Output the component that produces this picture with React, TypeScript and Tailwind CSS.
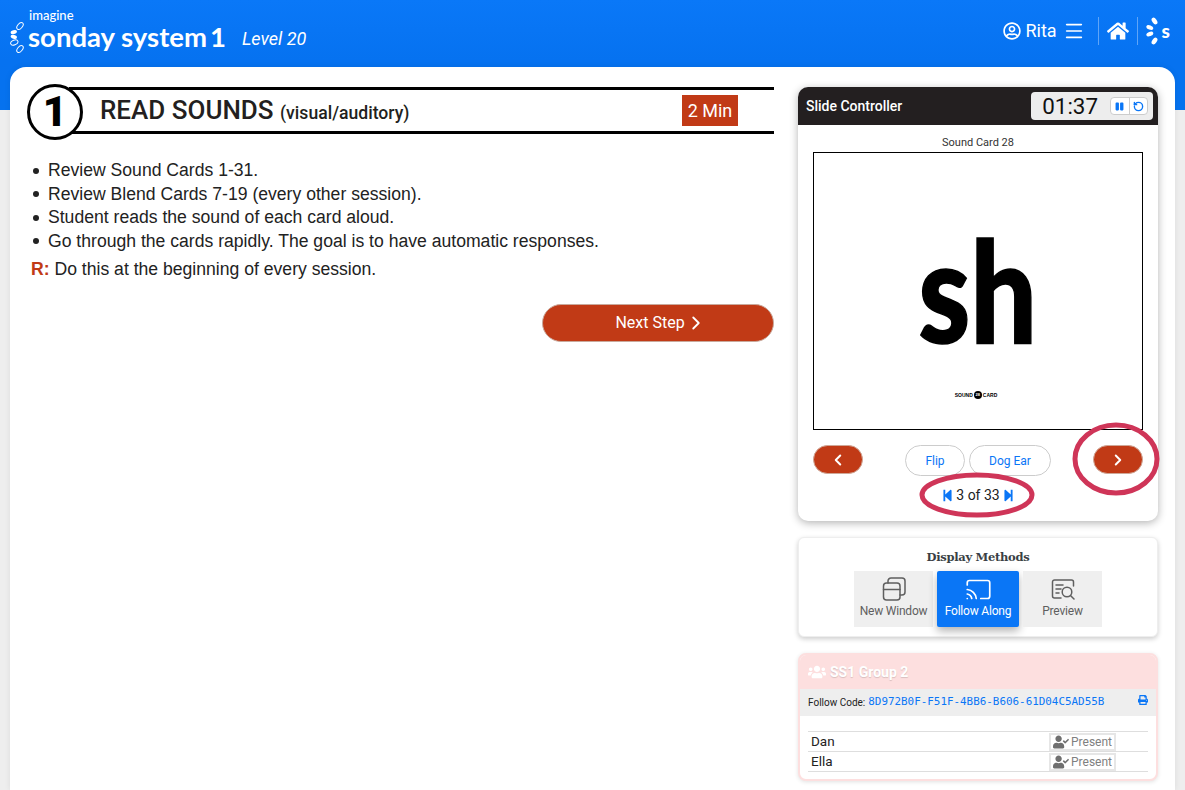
import { ChevronLeft, ChevronRight, Menu, RotateCcw, Cast } from 'lucide-react';
import { FaHome, FaPause, FaPrint, FaRegUserCircle, FaStepBackward, FaStepForward, FaUserCheck, FaUsers } from 'react-icons/fa';

const roboto = "font-['Roboto',sans-serif]";
const arial = "font-['Liberation_Sans',Arial,sans-serif]";

const steps = [
    'Review Sound Cards 1-31.',
    'Review Blend Cards 7-19 (every other session).',
    'Student reads the sound of each card aloud.',
    'Go through the cards rapidly. The goal is to have automatic responses.',
];

function BurstLogo() {
    return (
        <svg width="18" height="34" viewBox="0 0 18 34" className="mt-[12px] shrink-0">
            <ellipse cx="10" cy="5" rx="4" ry="2.4" transform="rotate(-50 10 5)" fill="none" stroke="white" strokeWidth="1" />
            <ellipse cx="3.8" cy="11.2" rx="3.2" ry="1.9" transform="rotate(-15 3.8 11.2)" fill="white" />
            <ellipse cx="3.8" cy="15.8" rx="3.2" ry="1.9" transform="rotate(15 3.8 15.8)" fill="white" />
            <ellipse cx="4.3" cy="21.5" rx="3.8" ry="2.3" transform="rotate(-20 4.3 21.5)" fill="none" stroke="white" strokeWidth="1" />
            <ellipse cx="10" cy="28" rx="4" ry="2.4" transform="rotate(-50 10 28)" fill="none" stroke="white" strokeWidth="1" />
        </svg>
    );
}

function SmallBurst() {
    return (
        <svg width="14" height="28" viewBox="0 0 14 28" className="shrink-0">
            <ellipse cx="8.5" cy="4" rx="3.8" ry="2.3" transform="rotate(55 8.5 4)" fill="white" />
            <ellipse cx="3.8" cy="10.5" rx="3.6" ry="2.1" transform="rotate(20 3.8 10.5)" fill="white" />
            <ellipse cx="3.8" cy="17" rx="3.6" ry="2.1" transform="rotate(-20 3.8 17)" fill="white" />
            <ellipse cx="8.5" cy="24" rx="3.8" ry="2.3" transform="rotate(-55 8.5 24)" fill="white" />
        </svg>
    );
}

function WindowIcon() {
    return (
        <svg width="24" height="24" viewBox="0 0 24 24" fill="none" stroke="#5f5f5f" strokeWidth="1.5" strokeLinecap="round">
            <rect x="1.5" y="6" width="16.5" height="17" rx="3" />
            <path d="M1.5 12.5H18" />
            <path d="M6 6V4a3 3 0 0 1 3-3h11a3 3 0 0 1 3 3v11a3 3 0 0 1-3 3h-2" />
        </svg>
    );
}

function PreviewIcon() {
    return (
        <svg width="24" height="24" viewBox="0 0 24 24" fill="none" stroke="#5f5f5f" strokeWidth="1.5" strokeLinecap="round">
            <path d="M10 21H3.5a2 2 0 0 1-2-2V5a2 2 0 0 1 2-2h17a2 2 0 0 1 2 2v4" />
            <path d="M5 8h7M5 12h5M5 16h3" />
            <circle cx="16" cy="15" r="4.8" />
            <path d="M19.5 18.5l3.5 3.5" />
        </svg>
    );
}

function Attendance({ name }: { name: string }) {
    return (
        <div className="flex h-5 items-center border-b border-[#dedede]">
            <span className={`w-[241px] pl-[3px] text-[13.5px] text-[#222] ${roboto}`}>{name}</span>
            <span className={`flex h-[18px] w-[67px] items-center justify-center gap-[2px] border-2 border-[#e6e6e6] text-[12px] text-[#808080] ${roboto}`}>
                <FaUserCheck size={16} color="#6f6f6f" />
                Present
            </span>
        </div>
    );
}

function PillArrow({ children }: { children: React.ReactNode }) {
    return (
        <button className="flex h-[29px] w-[50px] items-center justify-center rounded-full border border-[#cfa898] bg-[#c13a16] text-white">
            {children}
        </button>
    );
}

export default function App() {
    return (
        <div className="relative flex h-[790px] w-[1185px] flex-col overflow-hidden bg-[linear-gradient(#0a78f8_0px,#0672f0_60px,#0672ee_110px,#eeeeee_110px)]">
            <header className="flex h-[67px] shrink-0 items-start justify-between text-white">
                <div className="flex pl-[10px] pt-[9px]">
                    <BurstLogo />
                    <div className="ml-[1px] flex flex-col">
                        <span className="font-['Lato',sans-serif] text-[13px] leading-[13px] font-medium">imagine</span>
                        <span className="mt-[2px] ml-[-1px] font-['Lato',sans-serif] text-[27.5px] leading-[26px] font-bold whitespace-nowrap">
                            sonday system<span className="ml-[3px]">1</span>
                        </span>
                    </div>
                    <span className={`ml-[16px] mt-[18px] text-[18px] italic leading-[24px] ${roboto}`}>Level 20</span>
                </div>
                <div className="flex items-center pr-[15px] pt-[17px]">
                    <FaRegUserCircle size={18} />
                    <span className={`ml-[4px] text-[18px] leading-[28px] ${roboto}`}>Rita</span>
                    <Menu size={22} strokeWidth={1.8} className="ml-[6px]" />
                    <div className="ml-[13px] h-[28px] border-l border-[#5fa5f8]" />
                    <FaHome size={22} className="ml-[8px]" />
                    <div className="ml-[8px] h-[28px] border-l border-[#5fa5f8]" />
                    <div className="ml-[8px] flex items-center">
                        <SmallBurst />
                        <span className="ml-[2px] font-['Lato',sans-serif] text-[19px] leading-[20px] font-black">s</span>
                    </div>
                </div>
            </header>

            <main className="mx-[10px] flex min-h-0 flex-1 gap-[24px] rounded-t-[16px] bg-white pl-[17px] shadow-[0_0_6px_rgba(0,0,0,0.08)]">
                <section className="w-[747px] shrink-0 pt-[17px]">
                    <div className="flex items-start">
                        <div className={`z-10 flex h-[56px] w-[56px] shrink-0 items-center justify-center rounded-full border-[3px] border-black bg-white text-[42px] font-black leading-none text-black ${roboto}`}>
                            1
                        </div>
                        <div className="ml-[-14px] mt-[3px] flex h-[47px] flex-1 items-center border-y-[3px] border-black pl-[31px]">
                            <h1 className={`mt-[2px] text-[26px] font-medium leading-[30px] text-[#231f20] ${roboto}`}>
                                READ SOUNDS <span className="text-[17.6px]">(visual/auditory)</span>
                            </h1>
                            <span className={`ml-auto mr-[36px] flex h-[31px] w-[56px] items-center justify-center bg-[#c13a16] text-[18px] text-white ${roboto}`}>2 Min</span>
                        </div>
                    </div>
                    <ul className={`mt-[19px] text-[17.6px] leading-[23.5px] text-[#222] ${arial}`}>
                        {steps.map((step) => (
                            <li key={step} className="flex items-center">
                                <span className="ml-[6px] mr-[9px] h-[6px] w-[6px] shrink-0 rounded-full bg-[#222]" />
                                {step}
                            </li>
                        ))}
                    </ul>
                    <p className={`mt-[5px] ml-[4px] text-[17.6px] leading-[23.5px] text-[#222] ${arial}`}>
                        <b className="text-[#c13a16]">R:</b> Do this at the beginning of every session.
                    </p>
                    <div className="mt-[22px] flex justify-end">
                        <button className={`flex h-[38px] w-[232px] items-center justify-center rounded-full border border-[#c9a99c] bg-[#c13a16] text-[16px] text-white ${roboto}`}>
                            Next Step <ChevronRight size={22} strokeWidth={2} className="mr-[-6px]" />
                        </button>
                    </div>
                </section>

                <aside className="flex w-[360px] shrink-0 flex-col gap-[16px] pt-[20px]">
                    <div className="h-[434px] overflow-hidden rounded-[10px] bg-white shadow-[0_2px_8px_rgba(0,0,0,0.3)]">
                        <div className="flex h-[38px] items-center justify-between bg-[#231f20] pl-[8px] pr-[5px]">
                            <span className={`text-[14px] font-medium text-white ${roboto}`}>Slide Controller</span>
                            <div className="flex h-[28px] w-[122px] items-center justify-end rounded-[4px] bg-[#ededed] pr-[5px]">
                                <span className={`mr-[12px] text-[22.4px] leading-none text-[#111] ${roboto}`}>01:37</span>
                                <div className="flex h-[18px] w-[38px] overflow-hidden rounded-[4px] border border-[#ccc] bg-white text-[#0a76f6]">
                                    <span className="flex flex-1 items-center justify-center border-r border-[#ccc]"><FaPause size={9} /></span>
                                    <span className="flex flex-1 items-center justify-center"><RotateCcw size={11} strokeWidth={3} /></span>
                                </div>
                            </div>
                        </div>
                        <p className={`mt-[11px] text-center text-[11px] leading-[14px] text-[#333] ${roboto}`}>Sound Card 28</p>
                        <div className="mx-[15px] mt-[2px] flex h-[278px] flex-col items-center border border-black">
                            <span className="mt-[50px] inline-block origin-center scale-x-[0.83] font-['Lato',sans-serif] text-[142px] leading-[170px] font-black text-black [-webkit-text-stroke:1.5px_black]">sh</span>
                            <span className="mr-[4px] mt-[18px] flex items-center gap-[1px] font-['Liberation_Sans',sans-serif] text-[5px] font-bold leading-none text-black">
                                SOUND
                                <span className="flex h-[8px] w-[8px] items-center justify-center rounded-full bg-black text-[4px] text-white">28</span>
                                CARD
                            </span>
                        </div>
                        <div className="mx-[15px] mt-[15px] flex items-start">
                            <PillArrow><ChevronLeft size={18} strokeWidth={2.6} /></PillArrow>
                            <button className={`ml-[42px] h-[31px] w-[60px] rounded-full border border-[#ccc] text-[12px] text-[#0a76f6] ${roboto}`}>Flip</button>
                            <button className={`ml-[4px] h-[31px] w-[82px] rounded-full border border-[#ccc] text-[12px] text-[#0a76f6] ${roboto}`}>Dog Ear</button>
                            <div className="ml-auto"><PillArrow><ChevronRight size={18} strokeWidth={2.6} /></PillArrow></div>
                        </div>
                        <div className={`mt-[7px] flex items-center justify-center gap-[2px] text-[14px] leading-[24px] text-[#222] ${roboto}`}>
                            <FaStepBackward size={13} color="#0a76f6" />
                            3 of 33
                            <FaStepForward size={13} color="#0a76f6" />
                        </div>
                    </div>

                    <div className="h-[100px] rounded-[6px] border border-[#eee] bg-white pt-[11px] shadow-[0_2px_5px_rgba(0,0,0,0.2)]">
                        <p className="text-center font-['DejaVu_Serif'] text-[11.5px] font-bold leading-[16px] tracking-[-0.3px] text-[#3a3f45]">Display Methods</p>
                        <div className={`mt-[6px] flex justify-center gap-[4px] text-[12px] tracking-[-0.2px] ${roboto}`}>
                            <div className="flex h-[56px] w-[79px] flex-col items-center bg-[#efefef] pt-[6px] text-[#5f5f5f]">
                                <WindowIcon />
                                <span className="mt-[1px]">New Window</span>
                            </div>
                            <div className="flex h-[56px] w-[82px] flex-col items-center rounded-[2px] bg-[#0a76f6] pt-[6px] text-white shadow-[0_4px_8px_rgba(0,0,0,0.3)]">
                                <Cast size={27} strokeWidth={1.5} className="my-[-1.5px]" />
                                <span className="mt-[1px]">Follow Along</span>
                            </div>
                            <div className="flex h-[56px] w-[79px] flex-col items-center bg-[#efefef] pt-[6px] text-[#5f5f5f]">
                                <PreviewIcon />
                                <span className="mt-[1px]">Preview</span>
                            </div>
                        </div>
                    </div>

                    <div className="h-[128px] overflow-hidden rounded-[8px] border-2 border-[#fddfdf] bg-white shadow-[0_1px_4px_rgba(0,0,0,0.12)]">
                        <div className={`flex h-[34px] items-center gap-[4px] bg-[#fddfdf] pl-[8px] text-[14px] font-bold text-white [text-shadow:0_1px_1px_rgba(0,0,0,0.15)] ${roboto}`}>
                            <FaUsers size={18} />
                            SS1 Group 2
                        </div>
                        <div className="flex h-[27px] items-center justify-between bg-[#eeeeee] px-[8px]">
                            <span className={`flex items-center text-[10px] text-[#222] ${roboto}`}>
                                Follow Code:
                                <span className="ml-[3px] font-['DejaVu_Sans_Mono',monospace] text-[10.9px] text-[#0a76f6]">8D972B0F-F51F-4BB6-B606-61D04C5AD55B</span>
                            </span>
                            <FaPrint size={10} color="#0a76f6" className="mb-[5px]" />
                        </div>
                        <div className="mx-[8px] mt-[15px] border-t border-[#dedede]">
                            <Attendance name="Dan" />
                            <Attendance name="Ella" />
                        </div>
                    </div>
                </aside>
            </main>

            <svg width="1185" height="790" className="pointer-events-none absolute left-0 top-0" fill="none" stroke="#cf3558" strokeWidth="5">
                <ellipse cx="1116" cy="459" rx="41" ry="34" />
                <ellipse cx="977" cy="495" rx="55" ry="20" />
            </svg>
        </div>
    );
}
